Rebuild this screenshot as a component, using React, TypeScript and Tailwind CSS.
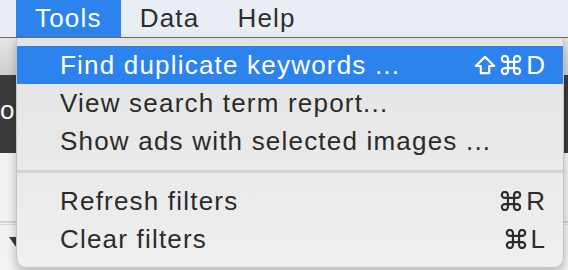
import React from "react";

type Item = { label: string; keys?: ("shift" | "cmd" | string)[]; active?: boolean };

const top: Item[] = [
  { label: "Find duplicate keywords ...", keys: ["shift", "cmd", "D"], active: true },
  { label: "View search term report..." },
  { label: "Show ads with selected images ..." },
];

const bottom: Item[] = [
  { label: "Refresh filters", keys: ["cmd", "R"] },
  { label: "Clear filters", keys: ["cmd", "L"] },
];

function ShiftIcon() {
  return (
    <svg width="22" height="20" viewBox="0 0 22 20" fill="none" stroke="currentColor" strokeWidth="2.2" strokeLinejoin="round">
      <path d="M11 1.8 20.2 11h-5v7.2H6.8V11h-5z" />
    </svg>
  );
}

function CmdIcon() {
  return (
    <svg width="22" height="20" viewBox="2.2 2.2 19.6 19.6" fill="none" stroke="currentColor" strokeWidth="2.1" strokeLinecap="round" strokeLinejoin="round">
      <path d="M15 6v12a3 3 0 1 0 3-3H6a3 3 0 1 0 3 3V6a3 3 0 1 0-3 3h12a3 3 0 1 0-3-3" />
    </svg>
  );
}

function Keys({ keys }: { keys: string[] }) {
  return (
    <span className="flex items-center gap-[4px]">
      {keys.map((k) =>
        k === "shift" ? <ShiftIcon key={k} /> : k === "cmd" ? <CmdIcon key={k} /> : <span key={k} className="tracking-normal">{k}</span>
      )}
    </span>
  );
}

function Row({ item }: { item: Item }) {
  return (
    <div
      className={`flex h-[38px] items-center justify-between pl-[43px] pr-[18px] leading-[38px] ${
        item.active ? "bg-[#2d83ed] text-white" : "text-[#2b2b2b]"
      }`}
    >
      <span>{item.label}</span>
      {item.keys && <Keys keys={item.keys} />}
    </div>
  );
}

export default function App() {
  return (
    <div className="relative h-[270px] w-[568px] overflow-hidden bg-[#f2f2f2] font-['Liberation_Sans',Arial,sans-serif] text-[26px] tracking-[1.2px]">
      {/* menu bar */}
      <div className="flex h-[38px] border-b border-[#6f6f6f] bg-[#e9edf4] pl-4 text-[#2e2e2e]">
        <div className="h-[37px] bg-[#2d83ed] px-[19px] leading-[36px] text-white">Tools</div>
        <div className="px-[19px] leading-[36px]">Data</div>
        <div className="px-[19px] leading-[36px]">Help</div>
      </div>

      {/* app window behind the menu */}
      <div className="h-[37px] bg-gradient-to-b from-[#e6e6e6] to-[#cfcfcf]" />
      <div className="h-[78px] bg-[#3b3b3b] pt-[22px] leading-none text-white">
        <span className="tracking-normal">o</span>
      </div>
      <div className="pt-[68px]">
        <div className="h-[2px] bg-[#cdd3d3]" />
        <div className="mt-[1px] h-[1px] bg-[#d6dcdc]" />
        <div className="ml-[9px] mt-[12px] h-0 w-0 border-x-[7px] border-t-[10px] border-x-transparent border-t-[#3b3b3b]" />
      </div>

      {/* dropdown */}
      <div className="absolute left-4 top-[38px] w-[548px] rounded-b-[10px] border-x border-b border-[#c4c4c4] bg-gradient-to-b from-[#e3e3e3] to-[#efefef] pb-[9px] pt-2 shadow-[0_4px_10px_rgba(0,0,0,0.25)]">
        {top.map((i) => (
          <Row key={i.label} item={i} />
        ))}
        <div className="flex h-[22px] items-center">
          <div className="h-[3px] w-full bg-[#d3d3d3]" />
        </div>
        {bottom.map((i) => (
          <Row key={i.label} item={i} />
        ))}
      </div>
    </div>
  );
}
